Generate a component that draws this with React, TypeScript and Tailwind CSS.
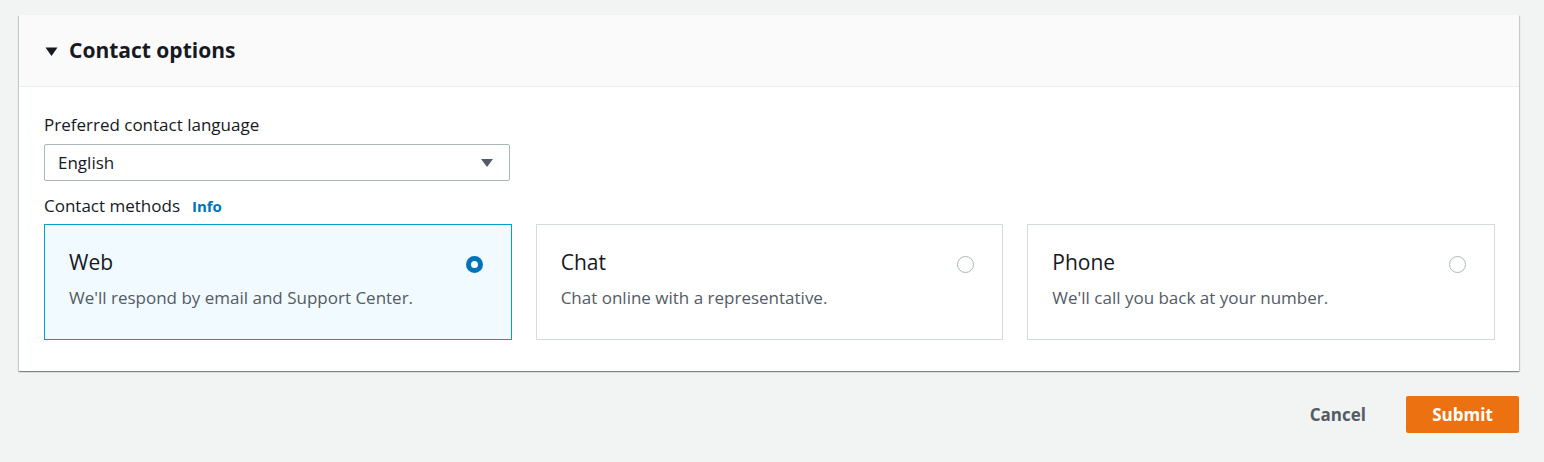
import React from "react";

const cards = [
  { title: "Web", desc: "We'll respond by email and Support Center.", selected: true },
  { title: "Chat", desc: "Chat online with a representative.", selected: false },
  { title: "Phone", desc: "We'll call you back at your number.", selected: false },
];

export default function App() {
  return (
    <div
      className="w-[1544px] h-[462px] bg-[#f2f3f3] pt-[15px] px-[19px] text-[#16191f]"
      style={{ fontFamily: '"Open Sans", "Noto Sans", sans-serif' }}
    >
      <div className="bg-white w-[1500px] shadow-[0_1px_1px_0_rgba(0,28,36,0.3),1px_1px_1px_0_rgba(0,28,36,0.15),-1px_1px_1px_0_rgba(0,28,36,0.15)]">
        <div className="h-[72px] bg-[#fafafa] border-b border-[#eaeded] flex items-center pl-[26px]">
          <svg width="13" height="13" viewBox="0 0 13 13" className="mr-[11px] mt-[1px]">
            <path d="M0.5 2.5 L12.5 2.5 L6.5 11 Z" fill="#16191f" />
          </svg>
          <span className="text-[21px] font-bold leading-none">Contact options</span>
        </div>
        <div className="pl-[25px] pr-[24px] pt-[27px] pb-[31px]">
          <div className="text-[17px] leading-[22px]">Preferred contact language</div>
          <div className="mt-[8px] w-[466px] h-[37px] border border-[#aab7b8] rounded-[2px] flex items-center justify-between pl-[13px] pr-[15px]">
            <span className="text-[17px]">English</span>
            <svg width="14" height="12" viewBox="0 0 14 12">
              <path d="M1 2 L13 2 L7 10 Z" fill="#545b64" />
            </svg>
          </div>
          <div className="mt-[14px] flex items-center gap-[12px] h-[22px]">
            <span className="text-[17px]">Contact methods</span>
            <span className="text-[15px] font-bold text-[#0073bb]">Info</span>
          </div>
          <div className="mt-[7px] grid grid-cols-3 gap-[24px]">
            {cards.map((c) => (
              <div
                key={c.title}
                className={
                  c.selected
                    ? "h-[116px] border border-[#00a1c9] bg-[#f1faff] pl-[24px] pr-[28px] pt-[23px]"
                    : "h-[116px] border border-[#d5dbdb] bg-white pl-[24px] pr-[28px] pt-[23px]"
                }
              >
                <div className="flex items-center justify-between h-[28px]">
                  <span className="text-[21px] leading-[28px]">{c.title}</span>
                  {c.selected ? (
                    <span className="w-[17px] h-[17px] rounded-full border-[5px] border-[#0073bb] bg-white mt-[4px]" />
                  ) : (
                    <span className="w-[17px] h-[17px] rounded-full border-[1.5px] border-[#aab7b8] bg-white mt-[4px]" />
                  )}
                </div>
                <div className="mt-[11px] text-[17px] text-[#545b64] leading-[22px]">{c.desc}</div>
              </div>
            ))}
          </div>
        </div>
      </div>
      <div className="w-[1500px] flex justify-end items-center mt-[25px] gap-[40px]">
        <span className="text-[17px] font-bold text-[#545b64]">Cancel</span>
        <button className="h-[37px] w-[113px] bg-[#ec7211] rounded-[2px] text-white text-[17px] font-bold">
          Submit
        </button>
      </div>
    </div>
  );
}
